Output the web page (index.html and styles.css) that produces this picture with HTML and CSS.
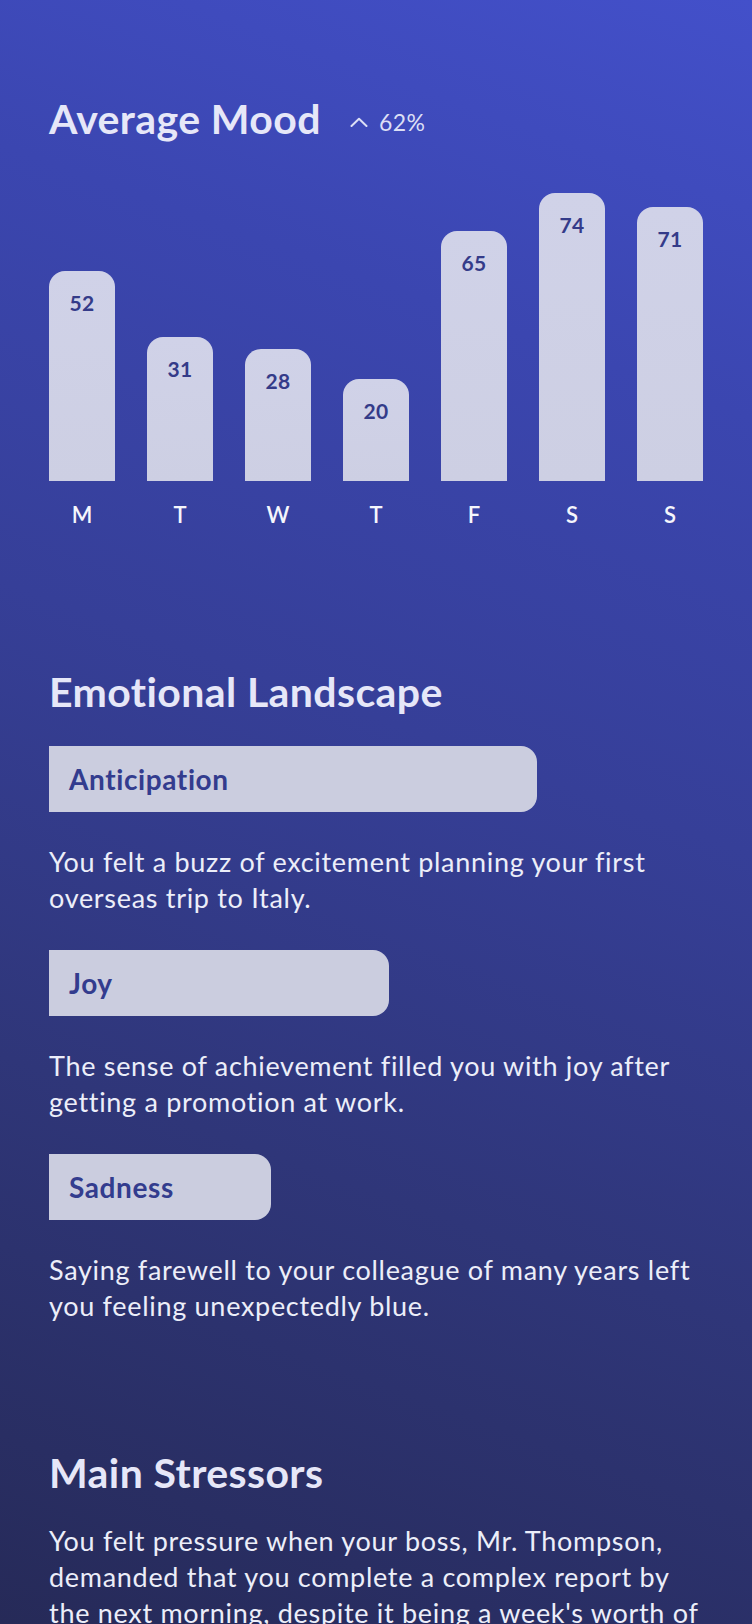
FILE: index.html
```html
<!DOCTYPE html>
<html lang="en">
<head>
<meta charset="utf-8">
<title>Mood Report</title>
<link rel="stylesheet" href="styles.css">
</head>
<body>
<main class="page">
  <section class="mood">
    <header class="mood-header">
      <h1 class="title">Average Mood</h1>
      <span class="trend">
        <svg class="trend-icon" width="18" height="10" viewBox="0 0 18 10" aria-hidden="true"><polyline points="1.5,9 9,1.8 16.5,9" fill="none" stroke="currentColor" stroke-width="2" stroke-linecap="round" stroke-linejoin="round"/></svg>
        62%
      </span>
    </header>
    <div class="chart">
      <div class="col"><div class="bar-area"><div class="bar" style="height:210px"><span class="bar-value">52</span></div></div><span class="day">M</span></div>
      <div class="col"><div class="bar-area"><div class="bar" style="height:144px"><span class="bar-value">31</span></div></div><span class="day">T</span></div>
      <div class="col"><div class="bar-area"><div class="bar" style="height:132px"><span class="bar-value">28</span></div></div><span class="day">W</span></div>
      <div class="col"><div class="bar-area"><div class="bar" style="height:102px"><span class="bar-value">20</span></div></div><span class="day">T</span></div>
      <div class="col"><div class="bar-area"><div class="bar" style="height:250px"><span class="bar-value">65</span></div></div><span class="day">F</span></div>
      <div class="col"><div class="bar-area"><div class="bar" style="height:288px"><span class="bar-value">74</span></div></div><span class="day">S</span></div>
      <div class="col"><div class="bar-area"><div class="bar" style="height:274px"><span class="bar-value">71</span></div></div><span class="day">S</span></div>
    </div>
  </section>

  <section class="landscape">
    <h2 class="section-title">Emotional Landscape</h2>
    <div class="emotion">
      <div class="pill" style="width:488px">Anticipation</div>
      <p class="text">You felt a buzz of excitement planning your first overseas trip to Italy.</p>
    </div>
    <div class="emotion">
      <div class="pill" style="width:340px">Joy</div>
      <p class="text">The sense of achievement filled you with joy after getting a promotion at work.</p>
    </div>
    <div class="emotion">
      <div class="pill" style="width:222px">Sadness</div>
      <p class="text">Saying farewell to your colleague of many years left you feeling unexpectedly blue.</p>
    </div>
  </section>

  <section class="stressors">
    <h2 class="section-title">Main Stressors</h2>
    <p class="text">You felt pressure when your boss, Mr. Thompson, demanded that you complete a complex report by the next morning, despite it being a week's worth of work. You stayed up late to finish it and felt drained the following day.</p>
  </section>
</main>
</body>
</html>
```

FILE: styles.css
```css
html, body {
  margin: 0;
  padding: 0;
  height: 1624px;
  overflow: hidden;
}

body {
  font-family: "Lato", "Liberation Sans", sans-serif;
  color: #eceef9;
  background: linear-gradient(200deg, #4350ca 0%, #3b46b0 22%, #363f98 45%, #2f3679 70%, #262a58 100%);
}

.page {
  padding: 95px 49px 0 49px;
  display: flex;
  flex-direction: column;
}

.mood-header {
  display: flex;
  align-items: center;
  gap: 29px;
}

.title,
.section-title {
  margin: 0;
  font-size: 41px;
  line-height: 48px;
  font-weight: 700;
  color: #e6e7f8;
  letter-spacing: 0.4px;
}

.trend {
  display: inline-flex;
  align-items: center;
  gap: 11px;
  padding-top: 5px;
  font-size: 23px;
  line-height: 28px;
  font-weight: 400;
  letter-spacing: 0.4px;
  color: #dcdff5;
}

.trend-icon {
  display: block;
}

.chart {
  margin-top: 38px;
  display: flex;
  gap: 32px;
}

.col {
  width: 66px;
  display: flex;
  flex-direction: column;
  align-items: center;
  gap: 21px;
}

.bar-area {
  height: 300px;
  width: 100%;
  display: flex;
  align-items: flex-end;
}

.bar {
  width: 100%;
  border-radius: 16px 16px 0 0;
  background: linear-gradient(180deg, #d0d2e8 0%, #cdcfe3 100%);
  display: flex;
  justify-content: center;
  box-sizing: border-box;
  padding-top: 20px;
}

.bar-value {
  font-size: 21px;
  line-height: 24px;
  font-weight: 700;
  letter-spacing: 0.3px;
  color: #343b89;
}

.day {
  font-size: 22px;
  line-height: 26px;
  font-weight: 600;
  color: #f5f6fc;
}

.landscape {
  margin-top: 140px;
  display: flex;
  flex-direction: column;
}

.landscape .section-title {
  margin-bottom: 30px;
}

.emotion {
  display: flex;
  flex-direction: column;
  margin-bottom: 34px;
}

.pill {
  box-sizing: border-box;
  height: 66px;
  display: flex;
  align-items: center;
  padding-left: 20px;
  border-radius: 0 16px 16px 0;
  background: #cbcddf;
  color: #333c8e;
  font-size: 28px;
  font-weight: 700;
  letter-spacing: 0.6px;
  margin-bottom: 32px;
}

.text {
  margin: 0 -6px 0 0;
  font-size: 27px;
  line-height: 36px;
  font-weight: 400;
  letter-spacing: 0.7px;
  color: #eceef9;
}

.stressors {
  margin-top: 91px;
  display: flex;
  flex-direction: column;
}

.stressors .section-title {
  margin-bottom: 26px;
}
```
